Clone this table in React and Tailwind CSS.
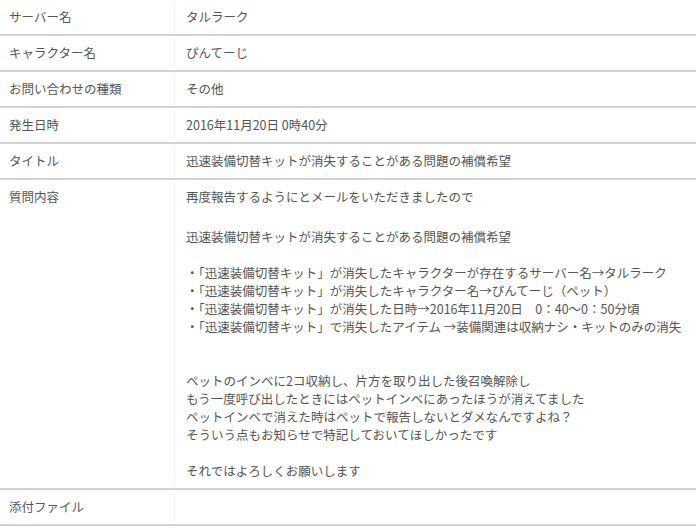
import React from "react";

const rows = [
  ["サーバー名", "タルラーク"],
  ["キャラクター名", "ぴんてーじ"],
  ["お問い合わせの種類", "その他"],
  ["発生日時", "2016年11月20日 0時40分"],
  ["タイトル", "迅速装備切替キットが消失することがある問題の補償希望"],
];

const body = [
  "迅速装備切替キットが消失することがある問題の補償希望",
  "",
  "・「迅速装備切替キット」が消失したキャラクターが存在するサーバー名→タルラーク",
  "・「迅速装備切替キット」が消失したキャラクター名→ぴんてーじ（ペット）",
  "・「迅速装備切替キット」が消失した日時→2016年11月20日　0：40～0：50分頃",
  "・「迅速装備切替キット」で消失したアイテム →装備関連は収納ナシ・キットのみの消失",
  "",
  "",
  "ペットのインベに2コ収納し、片方を取り出した後召喚解除し",
  "もう一度呼び出したときにはペットインベにあったほうが消えてました",
  "ペットインベで消えた時はペットで報告しないとダメなんですよね？",
  "そういう点もお知らせで特記しておいてほしかったです",
  "",
  "それではよろしくお願いします",
];

function Row({ label, children }) {
  return (
    <div className="flex border-b-2 border-[#d3d3d3]">
      <div className="w-[174px] shrink-0 pl-[9px] py-2">{label}</div>
      <div className="w-px shrink-0 my-[3px] border-l border-dotted border-[#e6e6e6]" />
      <div className="flex-1 pl-[11px] pr-2 py-2">{children}</div>
    </div>
  );
}

export default function App() {
  return (
    <div
      className="w-[696px] bg-white text-[12.5px] leading-[18px] text-[#555]"
      style={{ fontFamily: '"Noto Sans CJK JP", "Noto Sans", sans-serif' }}
    >
      {rows.map(([l, v]) => (
        <Row key={l} label={l}>
          {v}
        </Row>
      ))}
      <Row label="質問内容">
        <div className="mb-1">再度報告するようにとメールをいただきましたので</div>
        <div className="h-[18px]" />
        {body.map((t, i) =>
          t === "" ? (
            <div key={i} className="h-[18px]" />
          ) : (
            <div key={i} className="whitespace-nowrap">
              {t}
            </div>
          )
        )}
      </Row>
      <Row label="添付ファイル">
        <div className="h-[18px]" />
      </Row>
    </div>
  );
}
